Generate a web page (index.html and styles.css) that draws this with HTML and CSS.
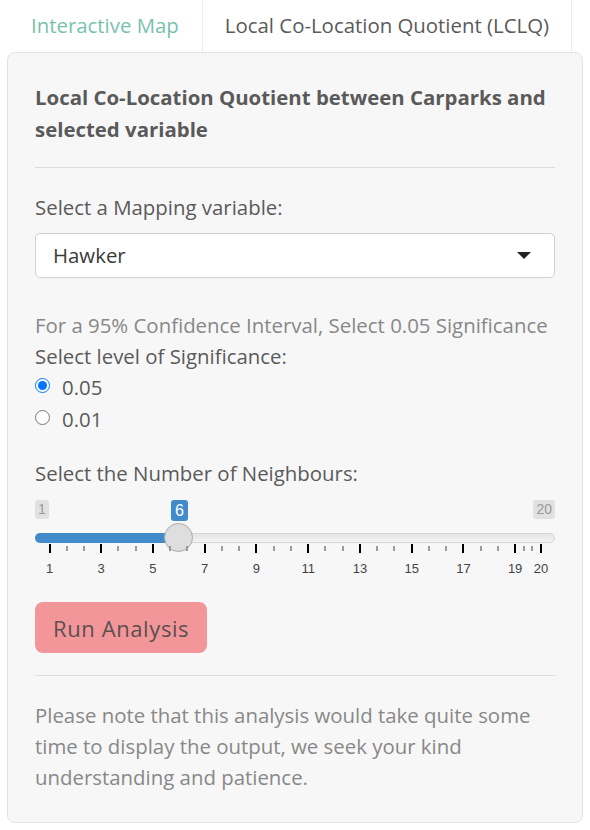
FILE: index.html
```html
<!DOCTYPE html>
<html lang="en">
<head>
<meta charset="utf-8">
<title>LCLQ</title>
<link rel="stylesheet" href="styles.css">
</head>
<body>
<nav class="tabs">
  <a class="tab">Interactive Map</a>
  <a class="tab active">Local Co-Location Quotient (LCLQ)</a>
</nav>
<div class="well">
  <h5 class="heading">Local Co-Location Quotient between Carparks and selected variable</h5>
  <hr class="rule">
  <label class="label">Select a Mapping variable:</label>
  <div class="select">
    <span class="select-text">Hawker</span>
    <svg class="caret" width="14" height="7" viewBox="0 0 14 7"><path d="M0 0 H14 L7 7 Z" fill="#222"/></svg>
  </div>
  <p class="hint">For a 95% Confidence Interval, Select 0.05 Significance</p>
  <div class="label-line">Select level of Significance:</div>
  <label class="radio"><input type="radio" name="sig" checked><span>0.05</span></label>
  <label class="radio"><input type="radio" name="sig"><span>0.01</span></label>
  <div class="label-line neigh">Select the Number of Neighbours:</div>
  <div class="slider">
    <span class="irs-min">1</span>
    <span class="irs-max">20</span>
    <span class="irs-single">6</span>
    <div class="irs-track"></div>
    <div class="irs-bar"></div>
    <div class="irs-handle"></div>
    <div class="irs-grid">
      <span class="tick major" style="left:0%"></span><span class="tlabel" style="left:0%">1</span>
      <span class="tick minor" style="left:3.509%"></span><span class="tick minor" style="left:7.018%"></span>
      <span class="tick major" style="left:10.526%"></span><span class="tlabel" style="left:10.526%">3</span>
      <span class="tick minor" style="left:14.035%"></span><span class="tick minor" style="left:17.544%"></span>
      <span class="tick major" style="left:21.053%"></span><span class="tlabel" style="left:21.053%">5</span>
      <span class="tick minor" style="left:24.561%"></span><span class="tick minor" style="left:28.070%"></span>
      <span class="tick major" style="left:31.579%"></span><span class="tlabel" style="left:31.579%">7</span>
      <span class="tick minor" style="left:35.088%"></span><span class="tick minor" style="left:38.596%"></span>
      <span class="tick major" style="left:42.105%"></span><span class="tlabel" style="left:42.105%">9</span>
      <span class="tick minor" style="left:45.614%"></span><span class="tick minor" style="left:49.123%"></span>
      <span class="tick major" style="left:52.632%"></span><span class="tlabel" style="left:52.632%">11</span>
      <span class="tick minor" style="left:56.140%"></span><span class="tick minor" style="left:59.649%"></span>
      <span class="tick major" style="left:63.158%"></span><span class="tlabel" style="left:63.158%">13</span>
      <span class="tick minor" style="left:66.667%"></span><span class="tick minor" style="left:70.175%"></span>
      <span class="tick major" style="left:73.684%"></span><span class="tlabel" style="left:73.684%">15</span>
      <span class="tick minor" style="left:77.193%"></span><span class="tick minor" style="left:80.702%"></span>
      <span class="tick major" style="left:84.211%"></span><span class="tlabel" style="left:84.211%">17</span>
      <span class="tick minor" style="left:87.719%"></span><span class="tick minor" style="left:91.228%"></span>
      <span class="tick major" style="left:94.737%"></span><span class="tlabel" style="left:94.737%">19</span>
      <span class="tick minor" style="left:96.491%"></span><span class="tick minor" style="left:98.246%"></span>
      <span class="tick major" style="left:100%"></span><span class="tlabel" style="left:100%">20</span>
    </div>
  </div>
  <button class="btn">Run Analysis</button>
  <hr class="rule rule2">
  <p class="note">Please note that this analysis would take quite some time to display the output, we seek your kind understanding and patience.</p>
</div>
</body>
</html>
```
FILE: styles.css
```css
html, body {
  margin: 0;
  padding: 0;
  background: #fff;
}
body {
  font-family: "Open Sans", "Noto Sans", sans-serif;
  font-size: 20.4px;
  line-height: 31px;
  color: #888;
}
.tabs {
  display: flex;
  padding-left: 8px;
  height: 52px;
}
.tab {
  display: block;
  padding: 10px 22px 11px;
  line-height: 31px;
  color: #78c2ad;
  border: 1px solid transparent;
  border-top: none;
  border-bottom: none;
}
.tab.active {
  background: #fff;
  color: #5a5a5a;
  border-color: #ececec;
}
.well {
  margin: 0 7px;
  background: #f7f7f7;
  border: 1px solid #e3e3e3;
  border-radius: 8px;
  padding: 28px 27px 29px;
}
.heading {
  margin: 0;
  font-size: 20.4px;
  line-height: 32px;
  font-weight: 700;
  color: #5a5a5a;
}
.rule {
  border: 0;
  border-top: 1px solid #dcdcdc;
  margin: 22px 0 24px;
}
.label, .label-line {
  display: block;
  color: #5a5a5a;
}
.select {
  margin-top: 10px;
  height: 43px;
  background: #fff;
  border: 1px solid #cfcfcf;
  border-radius: 5px;
  display: flex;
  align-items: center;
  justify-content: space-between;
  padding: 0 23px 0 17px;
}
.select-text {
  color: #3a3a3a;
}
.caret {
  display: block;
}
.hint {
  margin: 32px 0 0;
}
.radio {
  display: flex;
  align-items: center;
  color: #5a5a5a;
  height: 31px;
}
.radio input {
  margin: 0 12px 0 0;
  width: 15px;
  height: 15px;
  accent-color: #0075ff;
  position: relative;
  top: -2px;
}
.radio + .radio {
  margin-top: 1px;
}
.neigh {
  margin-top: 23px;
}
.slider {
  position: relative;
  height: 86px;
  margin-top: 7px;
  font-family: "Liberation Sans", Arial, sans-serif;
}
.irs-min, .irs-max, .irs-single {
  position: absolute;
  top: 4px;
  height: 19px;
  line-height: 19px;
  font-size: 14px;
  padding: 0 3px;
  border-radius: 3px;
  background: #e1e1e1;
  color: #999;
}
.irs-min { left: 0; }
.irs-max { right: 0; }
.irs-single {
  left: 136px;
  height: 21px;
  line-height: 21px;
  font-size: 16px;
  padding: 0 4px;
  background: #428bca;
  color: #fff;
}
.irs-track {
  position: absolute;
  left: 0;
  right: 0;
  top: 37px;
  height: 10px;
  box-sizing: border-box;
  border: 1px solid #d6d6d6;
  background: linear-gradient(#e4e4e4, #f4f4f4);
  border-radius: 5px;
}
.irs-bar {
  position: absolute;
  left: 0;
  width: 150px;
  top: 37px;
  height: 10px;
  background: #428bca;
  border-radius: 5px 0 0 5px;
}
.irs-handle {
  position: absolute;
  left: 129px;
  top: 27px;
  width: 29px;
  height: 29px;
  box-sizing: border-box;
  border-radius: 50%;
  background: #dedede;
  border: 1px solid #ababab;
}
.irs-grid {
  position: absolute;
  left: 14.5px;
  right: 14px;
  top: 48px;
  height: 34px;
}
.tick {
  position: absolute;
  top: 0;
  width: 2px;
  margin-left: -1px;
  background: #000;
  height: 9px;
}
.tick.minor {
  top: 2px;
  height: 5px;
  background: #9a9a9a;
}
.tlabel {
  position: absolute;
  top: 17px;
  width: 30px;
  margin-left: -15px;
  text-align: center;
  font-size: 13px;
  line-height: 15px;
  color: #444;
}
.btn {
  display: block;
  margin-top: 20px;
  height: 51px;
  padding: 0 18px;
  border: 0;
  border-radius: 8px;
  background: #f3969a;
  color: #5a5050;
  font-family: "Open Sans", "Noto Sans", sans-serif;
  font-size: 22px;
  letter-spacing: 0.6px;
}
.rule2 {
  margin: 22px 0 24px;
}
.note {
  margin: 0;
}
```
